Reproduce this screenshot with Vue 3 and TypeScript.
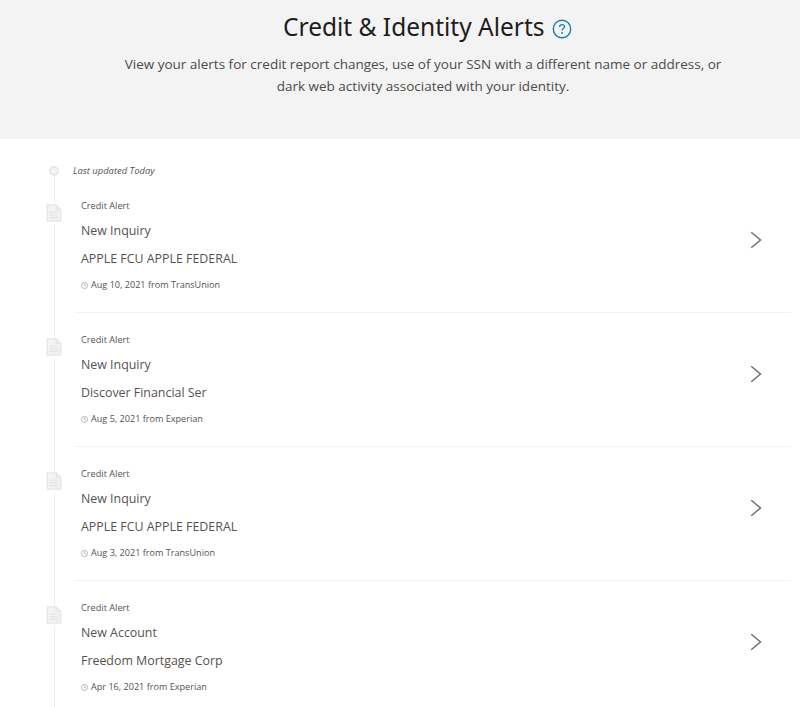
<template>
  <div class="page">
    <header class="hero">
      <h1>Credit &amp; Identity Alerts
        <svg class="help" width="20" height="20" viewBox="0 0 20 20">
          <circle cx="10" cy="10" r="8.7" fill="none" stroke="#1f7f9c" stroke-width="1.4" />
          <path d="M7.6 8c0-1.500 1.100-2.400 2.500-2.400s2.400.9 2.400 2.100c0 1.900-2.400 1.900-2.400 3.800" fill="none" stroke="#1f7f9c" stroke-width="1.3" />
          <circle cx="10.1" cy="14" r=".9" fill="#1f7f9c" />
        </svg>
      </h1>
      <p>View your alerts for credit report changes, use of your SSN with a different name or address, or dark web activity associated with your identity.</p>
    </header>

    <section class="timeline">
      <div class="updated">
        <div class="rail">
          <span class="dot"></span>
          <span class="line"></span>
        </div>
        <em>Last updated Today</em>
      </div>

      <div v-for="alert in alerts" :key="alert.id" class="alert">
        <div class="rail">
          <span class="line stub"></span>
          <svg class="doc" width="16" height="18" viewBox="0 0 18 20" preserveAspectRatio="none">
            <path d="M1.500 1h10l5 5v13h-15z" fill="#f4f2f2" stroke="#e6e3e3" stroke-width="1.4" />
            <path d="M11.500 1v5h5M4 9h10M4 12h10M4 15h10" fill="none" stroke="#e6e3e3" stroke-width="1.4" />
          </svg>
          <span class="line"></span>
        </div>
        <div class="card">
          <div class="body">
            <div class="kind">Credit Alert</div>
            <div class="title">{{ alert.title }}</div>
            <div class="title">{{ alert.company }}</div>
            <div class="date">
              <svg width="7" height="7" viewBox="0 0 7 7">
                <circle cx="3.500" cy="3.500" r="3" fill="none" stroke="#9a9a9a" stroke-width=".7" />
                <path d="M3.500 1.600v2h1.500" fill="none" stroke="#9a9a9a" stroke-width=".6" />
              </svg>
              {{ alert.date }}
            </div>
          </div>
          <svg class="chevron" width="12" height="18" viewBox="0 0 12 18">
            <path d="M1.200 1.200 10.500 9 1.200 16.800" fill="none" stroke="#6f6f6f" stroke-width="1.500" />
          </svg>
        </div>
      </div>
    </section>
  </div>
</template>

<script setup lang="ts">
const alerts = [
  { id: 1, title: 'New Inquiry', company: 'APPLE FCU APPLE FEDERAL', date: 'Aug 10, 2021 from TransUnion' },
  { id: 2, title: 'New Inquiry', company: 'Discover Financial Ser', date: 'Aug 5, 2021 from Experian' },
  { id: 3, title: 'New Inquiry', company: 'APPLE FCU APPLE FEDERAL', date: 'Aug 3, 2021 from TransUnion' },
  { id: 4, title: 'New Account', company: 'Freedom Mortgage Corp', date: 'Apr 16, 2021 from Experian' }
]
</script>

<style>
html, body {
  background: #fff;
  overflow: hidden;
}
</style>

<style scoped>
.page {
  height: 707px;
  overflow: hidden;
  font-family: "Open Sans", "Noto Sans", sans-serif;
  color: #555252;
}

.hero {
  height: 139px;
  box-sizing: border-box;
  padding: 8px 0 0 46px;
  background: #f3f3f3;
  text-align: center;
}

.hero h1 {
  margin: 0;
  padding-left: 9px;
  font-family: "Noto Sans", sans-serif;
  font-size: 24.5px;
  font-weight: 400;
  line-height: 38px;
  color: #1f1c1c;
}

.help {
  margin-left: 1px;
  vertical-align: -3px;
}

.hero p {
  width: 620px;
  margin: 7px auto 0;
  font-size: 13.5px;
  line-height: 22px;
  color: #4d4a4a;
}

.timeline {
  padding: 22px 9px 0 45px;
}

.updated,
.alert {
  display: flex;
}

.updated {
  height: 18px;
}

.updated em {
  margin-left: 10px;
  font-size: 9.400px;
  line-height: 20px;
}

.rail {
  flex: 0 0 18px;
  display: flex;
  flex-direction: column;
  align-items: center;
}

.dot {
  flex: none;
  box-sizing: border-box;
  width: 10px;
  height: 10px;
  margin-top: 5px;
  border: 2px solid #e8e6e6;
  border-radius: 50%;
  background: #f7f6f6;
}

.line {
  flex: 1;
  width: 1px;
  background: #f1efef;
}

.stub {
  flex: 0 0 25px;
}

.doc {
  flex: none;
  margin-bottom: 2px;
}

.alert {
  height: 134px;
}

.card {
  flex: 1;
  display: flex;
  align-items: flex-start;
  justify-content: space-between;
  margin-left: 12px;
  padding: 20px 29px 0 6px;
  border-bottom: 1px solid #f3f1f1;
}

.kind {
  font-size: 9.200px;
  line-height: 14px;
}

.title {
  margin-top: 7px;
  font-size: 12.400px;
  line-height: 21px;
}

.kind + .title {
  margin-top: 7px;
}

.date {
  display: flex;
  align-items: center;
  gap: 3px;
  margin-top: 9px;
  font-size: 9.100px;
  line-height: 14px;
}

.chevron {
  flex: none;
  margin-top: 32px;
}
</style>
